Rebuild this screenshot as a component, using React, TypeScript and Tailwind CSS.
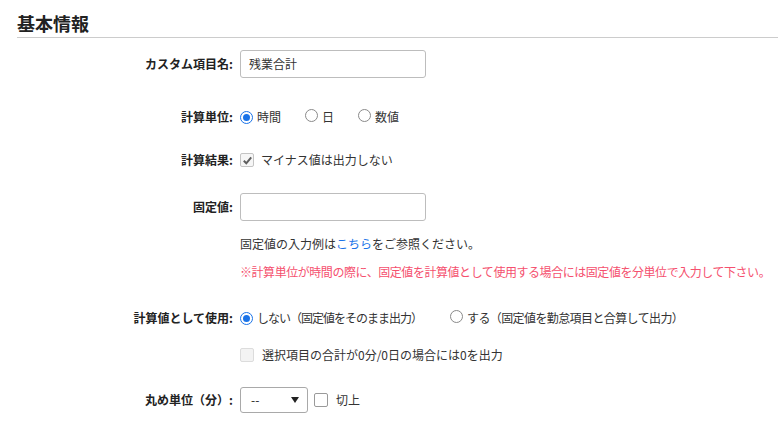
import React from 'react';

const Radio: React.FC<{ checked?: boolean }> = ({ checked }) => (
  <span
    className={
      'inline-flex items-center justify-center w-[13px] h-[13px] rounded-full border bg-white shrink-0 ' +
      (checked ? 'border-[#1a73e8] border-[1.5px]' : 'border-[#8a8a8a]')
    }
  >
    {checked && <span className="w-[7px] h-[7px] rounded-full bg-[#1a73e8]" />}
  </span>
);

const Label: React.FC<{ children: React.ReactNode }> = ({ children }) => (
  <div className="w-[233px] shrink-0 text-right font-bold text-[12px] text-[#222]">{children}</div>
);

const App: React.FC = () => {
  return (
    <div
      className="w-[778px] h-[433px] bg-white text-[12px] text-[#333] overflow-hidden"
      style={{ fontFamily: '"Noto Sans CJK JP", "Noto Sans", sans-serif' }}
    >
      {/* heading */}
      <div className="pl-[17px] pt-[11px]">
        <h2 className="text-[18px] font-bold text-[#222] leading-[24px] pb-[2px] border-b border-[#cccccc]">基本情報</h2>
      </div>

      {/* custom name */}
      <div className="flex items-center mt-[12px] h-[28px]">
        <Label>カスタム項目名:</Label>
        <div className="ml-[7px] w-[186px] h-[28px] border border-[#bdbdbd] rounded-[3px] flex items-center px-[8px] text-[#333]">
          残業合計
        </div>
      </div>

      {/* unit */}
      <div className="flex items-center mt-[29px] h-[20px]">
        <Label>計算単位:</Label>
        <div className="ml-[7px] flex items-center">
          <Radio checked />
          <span className="ml-[4px]">時間</span>
          <span className="ml-[24px]"><Radio /></span>
          <span className="ml-[4px]">日</span>
          <span className="ml-[24px]"><Radio /></span>
          <span className="ml-[4px]">数値</span>
        </div>
      </div>

      {/* result */}
      <div className="flex items-center mt-[23px] h-[20px]">
        <Label>計算結果:</Label>
        <div className="ml-[7px] flex items-center">
          <span className="w-[14px] h-[14px] border border-[#c4c4c4] bg-[#f6f6f6] rounded-[2px] flex items-center justify-center">
            <svg width="11" height="11" viewBox="0 0 11 11">
              <path d="M1.8 5.8 L4.3 8.3 L9.2 2.4" fill="none" stroke="#5f5f5f" strokeWidth="2" />
            </svg>
          </span>
          <span className="ml-[7px]">マイナス値は出力しない</span>
        </div>
      </div>

      {/* fixed value */}
      <div className="flex items-center mt-[23px] h-[28px]">
        <Label>固定値:</Label>
        <div className="ml-[7px] w-[186px] h-[28px] border border-[#bdbdbd] rounded-[3px]" />
      </div>

      <div className="ml-[240px] mt-[14px] leading-[18px]">
        固定値の入力例は<span className="text-[#1a73e8]">こちら</span>をご参照ください。
      </div>
      <div className="ml-[240px] mt-[10px] leading-[18px] text-[#f5506e] tracking-[-0.45px] whitespace-nowrap">
        ※計算単位が時間の際に、固定値を計算値として使用する場合には固定値を分単位で入力して下さい。
      </div>

      {/* use as calc value */}
      <div className="flex items-center mt-[27px] h-[20px]">
        <Label>計算値として使用:</Label>
        <div className="ml-[7px] flex items-center">
          <Radio checked />
          <span className="ml-[4px] tracking-[-1px]">しない（固定値をそのまま出力）</span>
          <span className="ml-[28px]"><Radio /></span>
          <span className="ml-[4px] tracking-[-0.6px]">する（固定値を勤怠項目と合算して出力）</span>
        </div>
      </div>

      <div className="flex items-center mt-[17px] h-[20px] ml-[240px]">
        <span className="w-[14px] h-[14px] border border-[#dcdcdc] bg-[#f3f3f3] rounded-[2px]" />
        <span className="ml-[8px]">選択項目の合計が0分/0日の場合には0を出力</span>
      </div>

      {/* rounding */}
      <div className="flex items-center mt-[22px] h-[26px]">
        <Label>丸め単位（分）:</Label>
        <div className="ml-[7px] w-[68px] h-[26px] border border-[#a9a9a9] rounded-[3px] flex items-center justify-between pl-[10px] pr-[8px] text-[#222]">
          <span>--</span>
          <svg width="8" height="6" viewBox="0 0 8 6">
            <path d="M0 0 H8 L4 6 Z" fill="#222" />
          </svg>
        </div>
        <span className="ml-[6px] w-[14px] h-[14px] border border-[#9a9a9a] bg-white rounded-[2px]" />
        <span className="ml-[8px]">切上</span>
      </div>
    </div>
  );
};

export default App;
